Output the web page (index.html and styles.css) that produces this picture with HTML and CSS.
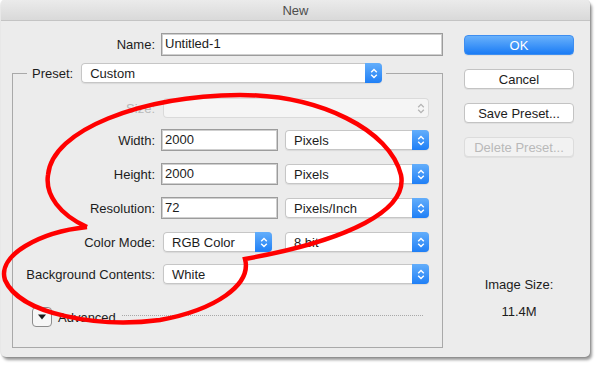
FILE: index.html
```html
<!DOCTYPE html>
<html lang="en">
<head>
    <meta charset="UTF-8">
    <meta name="viewport" content="width=device-width, initial-scale=1.0">
    <title>New</title>
    <link rel="stylesheet" href="styles.css">
</head>
<body>
<div class="window">
    <div class="titlebar">New</div>
    <div class="content">
        <div class="main">
            <div class="name-row">
                <label class="label">Name:</label>
                <div class="text-field name-field">Untitled-1</div>
            </div>
            <fieldset class="group">
                <legend class="preset">
                    <div class="preset-inner">
                        <span class="preset-label">Preset:</span>
                        <div class="popup preset-popup">
                            <span class="popup-text">Custom</span>
                            <span class="stepper"><svg width="8" height="13" viewBox="0 0 8 13"><path d="M1.2 5.2 L4 2.4 L6.8 5.2 M1.2 7.8 L4 10.6 L6.8 7.8" fill="none" stroke="#fff" stroke-width="1.4"/></svg></span>
                        </div>
                    </div>
                </legend>

                <div class="row row-size">
                    <label class="label disabled">Size:</label>
                    <div class="popup popup-disabled wide-popup">
                        <span class="popup-text"></span>
                        <span class="stepper plain"><svg width="8" height="13" viewBox="0 0 8 13"><path d="M1.2 5.2 L4 2.4 L6.8 5.2 M1.2 7.8 L4 10.6 L6.8 7.8" fill="none" stroke="#b4b4b4" stroke-width="1.3"/></svg></span>
                    </div>
                </div>

                <div class="row row-width">
                    <label class="label">Width:</label>
                    <div class="text-field num-field">2000</div>
                    <div class="popup unit-popup">
                        <span class="popup-text">Pixels</span>
                        <span class="stepper"><svg width="8" height="13" viewBox="0 0 8 13"><path d="M1.2 5.2 L4 2.4 L6.8 5.2 M1.2 7.8 L4 10.6 L6.8 7.8" fill="none" stroke="#fff" stroke-width="1.4"/></svg></span>
                    </div>
                </div>

                <div class="row">
                    <label class="label">Height:</label>
                    <div class="text-field num-field">2000</div>
                    <div class="popup unit-popup">
                        <span class="popup-text">Pixels</span>
                        <span class="stepper"><svg width="8" height="13" viewBox="0 0 8 13"><path d="M1.2 5.2 L4 2.4 L6.8 5.2 M1.2 7.8 L4 10.6 L6.8 7.8" fill="none" stroke="#fff" stroke-width="1.4"/></svg></span>
                    </div>
                </div>

                <div class="row">
                    <label class="label">Resolution:</label>
                    <div class="text-field num-field">72</div>
                    <div class="popup unit-popup">
                        <span class="popup-text">Pixels/Inch</span>
                        <span class="stepper"><svg width="8" height="13" viewBox="0 0 8 13"><path d="M1.2 5.2 L4 2.4 L6.8 5.2 M1.2 7.8 L4 10.6 L6.8 7.8" fill="none" stroke="#fff" stroke-width="1.4"/></svg></span>
                    </div>
                </div>

                <div class="row">
                    <label class="label">Color Mode:</label>
                    <div class="popup mode-popup">
                        <span class="popup-text">RGB Color</span>
                        <span class="stepper"><svg width="8" height="13" viewBox="0 0 8 13"><path d="M1.2 5.2 L4 2.4 L6.8 5.2 M1.2 7.8 L4 10.6 L6.8 7.8" fill="none" stroke="#fff" stroke-width="1.4"/></svg></span>
                    </div>
                    <div class="popup bit-popup">
                        <span class="popup-text">8 bit</span>
                        <span class="stepper"><svg width="8" height="13" viewBox="0 0 8 13"><path d="M1.2 5.2 L4 2.4 L6.8 5.2 M1.2 7.8 L4 10.6 L6.8 7.8" fill="none" stroke="#fff" stroke-width="1.4"/></svg></span>
                    </div>
                </div>

                <div class="row row-bg">
                    <label class="label">Background Contents:</label>
                    <div class="popup wide-popup">
                        <span class="popup-text">White</span>
                        <span class="stepper"><svg width="8" height="13" viewBox="0 0 8 13"><path d="M1.2 5.2 L4 2.4 L6.8 5.2 M1.2 7.8 L4 10.6 L6.8 7.8" fill="none" stroke="#fff" stroke-width="1.4"/></svg></span>
                    </div>
                </div>

                <div class="advanced">
                    <span class="disclosure"><svg width="10" height="8" viewBox="0 0 10 8"><path d="M1 1.5 L9 1.5 L5 6.5 Z" fill="#1a1a1a"/></svg></span>
                    <span class="adv-label">Advanced</span>
                    <span class="adv-line"></span>
                </div>
            </fieldset>
        </div>

        <div class="side">
            <button class="btn btn-default">OK</button>
            <button class="btn">Cancel</button>
            <button class="btn">Save Preset...</button>
            <button class="btn btn-disabled">Delete Preset...</button>
            <div class="image-size">
                <div class="image-size-label">Image Size:</div>
                <div class="image-size-value">11.4M</div>
            </div>
        </div>
    </div>
</div>

<svg class="annotation" width="598" height="367" viewBox="0 0 598 367">
    <path d="M87 227 C60 215, 45 195, 48 175 C52 130, 140 96, 240 95 C320 95, 390 130, 401 175 C408 210, 350 240, 245 259 C252 285, 215 310, 160 320 C100 328, 20 315, 5 280 C-3 255, 40 232, 87 227"
          fill="none" stroke="#f00" stroke-width="4.5" stroke-linejoin="miter"/>
</svg>
</body>
</html>
```

FILE: styles.css
```css
body {
    margin: 0;
    background: #fff;
    font-family: "Liberation Sans", Arial, sans-serif;
    font-size: 13px;
    color: #1c1c1c;
    position: relative;
    width: 598px;
    height: 367px;
    overflow: hidden;
}

.window {
    margin-left: 1px;
    width: 589px;
    height: 357px;
    background: #ececec;
    border-radius: 5px;
    box-shadow: 0 0 0 1px rgba(0,0,0,0.08), 2px 3px 3px rgba(0,0,0,0.4);
    overflow: hidden;
}

.titlebar {
    height: 20px;
    line-height: 21px;
    text-align: center;
    color: #4d4d4d;
    background: linear-gradient(#ebebeb, #d9d9d9);
    border-bottom: 1px solid #c4c4c4;
}

.content {
    display: flex;
    padding: 12px 0 0 11px;
}

.main {
    width: 431px;
}

.label {
    width: 142px;
    margin-right: 6px;
    text-align: right;
    flex-shrink: 0;
}

.label.disabled {
    color: #b8b8b8;
}

.name-row {
    display: flex;
    align-items: center;
    height: 23px;
}

.name-row .label {
    width: 143px;
}

.text-field {
    box-sizing: border-box;
    height: 22px;
    line-height: 20px;
    padding-left: 3px;
    background: #fff;
    border: 1px solid #9c9c9c;
    box-shadow: inset 0 0 0 1px #cfcfcf;
}

.name-field {
    flex: 1;
    height: 23px;
}

.num-field {
    width: 117px;
    margin-right: 7px;
}

.group {
    margin: 7px 0 0 0;
    padding: 0 13px 20px 0;
    border: 1px solid #a9a9a9;
    min-width: 0;
}

.preset {
    margin-left: 14px;
    padding: 0 4px;
}

.preset-inner {
    display: flex;
    align-items: center;
    height: 20px;
}

.preset-label {
    margin-left: 1px;
    margin-right: 8px;
}

.popup {
    box-sizing: border-box;
    display: flex;
    align-items: center;
    height: 20px;
    background: #fff;
    border-radius: 4px;
    overflow: hidden;
    box-shadow: inset 0 0 0 1px #c6c6c6, 0 1px 1px rgba(0,0,0,0.08);
}

.popup-text {
    flex: 1;
    padding-left: 9px;
    white-space: nowrap;
}

.stepper {
    width: 17px;
    height: 100%;
    display: flex;
    align-items: center;
    justify-content: center;
    background: linear-gradient(#63aefb, #1f7ff6);
}

.stepper.plain {
    background: none;
}

.preset-popup {
    width: 301px;
}

.popup-disabled {
    background: #f5f5f5;
    box-shadow: inset 0 0 0 1px #dadada;
}

.row {
    display: flex;
    align-items: center;
    height: 22px;
    margin-top: 12px;
}

.row-size {
    margin-top: 14px;
}

.row-width {
    margin-top: 10px;
}

.row-bg {
    margin-top: 10px;
}

.wide-popup {
    width: 266px;
    margin-left: 2px;
}

.unit-popup {
    width: 144px;
}

.mode-popup {
    width: 109px;
    margin-left: 2px;
}

.bit-popup {
    width: 144px;
    margin-left: 13px;
}

.advanced {
    display: flex;
    align-items: center;
    height: 20px;
    margin: 22px 0 0 19px;
}

.disclosure {
    box-sizing: border-box;
    width: 20px;
    height: 20px;
    display: flex;
    align-items: center;
    justify-content: center;
    border: 1px solid #8c8c8c;
    border-radius: 4px;
    background: #f6f6f6;
}

.adv-label {
    margin-left: 6px;
}

.adv-line {
    flex: 1;
    margin: 0 6px 4px 6px;
    border-top: 1px dotted #a8a8a8;
}

.side {
    width: 110px;
    margin-left: 21px;
    display: flex;
    flex-direction: column;
}

.btn {
    box-sizing: border-box;
    width: 110px;
    height: 20px;
    margin-top: 14px;
    padding: 0;
    font-family: inherit;
    font-size: 13px;
    color: #1c1c1c;
    background: #fff;
    border: 1px solid #c3c3c3;
    border-radius: 4px;
    box-shadow: 0 1px 0 rgba(0,0,0,0.05);
}

.btn-default {
    margin-top: 2px;
    color: #fff;
    background: linear-gradient(#69b1fb, #1b7cf5);
    border-color: #3e8ef0;
}

.btn-disabled {
    color: #b9b9b9;
    background: #f2f2f2;
    border-color: #dcdcdc;
}

.image-size {
    margin-top: 120px;
    text-align: center;
    line-height: 16px;
}

.image-size-value {
    margin-top: 11px;
}

.annotation {
    position: absolute;
    left: 0;
    top: 0;
    pointer-events: none;
}
```
